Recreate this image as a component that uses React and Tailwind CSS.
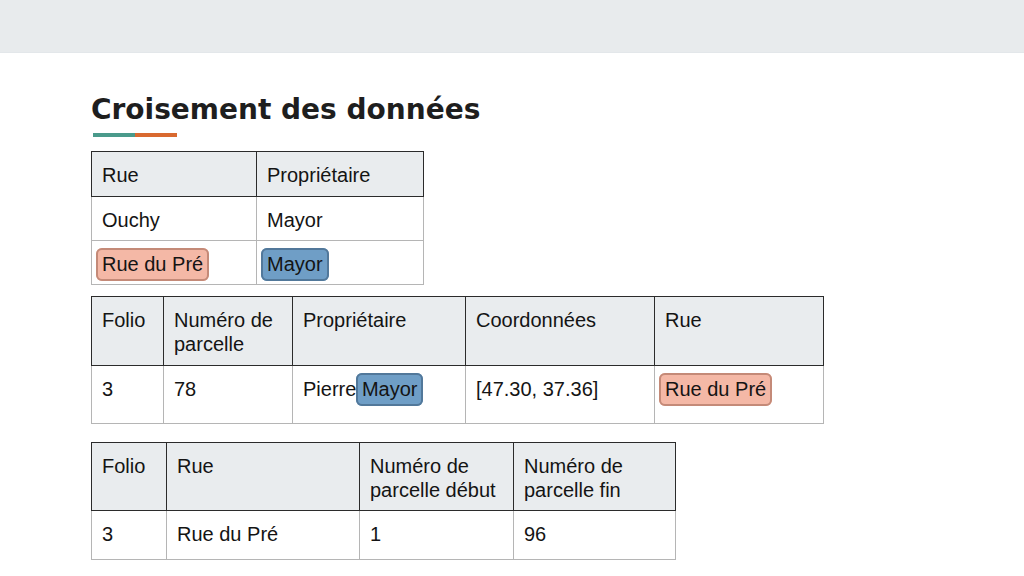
const Pill = ({ color, children }) => {
    const colors = color === 'blue'
        ? 'bg-[#6f9ec6] border-[#52789a]'
        : 'bg-[#f4b8a6] border-[#c48a78]'
    return (
        <span className={`rounded-[6px] border-2 pt-[3px] pb-[4px] px-[4px] -mx-[6px] ${colors}`}>{children}</span>
    )
}

const Th = ({ children, tight }) => (
    <th className={`border border-[#2b2b2b] bg-[#e9ecee] px-[10px] pt-[11px] text-left align-top font-normal ${tight ? 'pb-[8px]' : 'pb-[9px]'}`}>{children}</th>
)

const Td = ({ children, h }) => (
    <td className={`border border-[#b5b5b5] px-[10px] pt-[11px] pb-[8px] align-top ${h || ''}`}>{children}</td>
)

const App = () => {
    return (
        <div className="w-[1024px] h-[576px] overflow-hidden bg-white" style={{ fontFamily: '"Liberation Sans", Arial, sans-serif' }}>
            <div className="h-[53px] bg-[#e8ebed] border-b border-[#e3e7ea]"></div>
            <div className="pl-[91px]">
                <h1 className="mt-[39px] text-[28px] leading-[36px] font-bold text-[#1e1e1e]" style={{ fontFamily: '"DejaVu Sans", sans-serif' }}>Croisement des données</h1>
                <div className="flex mt-[5px] ml-[2px]">
                    <div className="w-[42px] h-[4px] bg-[#4a9a8b]"></div>
                    <div className="w-[42px] h-[4px] bg-[#d9692f]"></div>
                </div>

                <table className="mt-[14px] table-fixed border-collapse w-[333px] text-[20px] leading-[24px] text-[#141414]">
                    <colgroup>
                        <col className="w-[165px]" />
                        <col className="w-[167px]" />
                    </colgroup>
                    <thead>
                        <tr><Th>Rue</Th><Th>Propriétaire</Th></tr>
                    </thead>
                    <tbody>
                        <tr><Td>Ouchy</Td><Td>Mayor</Td></tr>
                        <tr><Td><Pill color="red">Rue du Pré</Pill></Td><Td><Pill color="blue">Mayor</Pill></Td></tr>
                    </tbody>
                </table>

                <table className="mt-[11px] table-fixed border-collapse w-[733px] text-[20px] leading-[24px] text-[#141414]">
                    <colgroup>
                        <col className="w-[72px]" />
                        <col className="w-[129px]" />
                        <col className="w-[173px]" />
                        <col className="w-[189px]" />
                        <col className="w-[169px]" />
                    </colgroup>
                    <thead>
                        <tr><Th>Folio</Th><Th>Numéro de parcelle</Th><Th>Propriétaire</Th><Th>Coordonnées</Th><Th>Rue</Th></tr>
                    </thead>
                    <tbody>
                        <tr>
                            <Td h="h-[58px]">3</Td>
                            <Td h="h-[58px]">78</Td>
                            <Td h="h-[58px]">Pierre <Pill color="blue">Mayor</Pill></Td>
                            <Td h="h-[58px]">[47.30, 37.36]</Td>
                            <Td h="h-[58px]"><Pill color="red">Rue du Pré</Pill></Td>
                        </tr>
                    </tbody>
                </table>

                <table className="mt-[18px] table-fixed border-collapse w-[585px] text-[20px] leading-[24px] text-[#141414]">
                    <colgroup>
                        <col className="w-[75px]" />
                        <col className="w-[193px]" />
                        <col className="w-[154px]" />
                        <col className="w-[162px]" />
                    </colgroup>
                    <thead>
                        <tr><Th tight>Folio</Th><Th tight>Rue</Th><Th tight>Numéro de parcelle début</Th><Th tight>Numéro de parcelle fin</Th></tr>
                    </thead>
                    <tbody>
                        <tr><Td h="h-[49px]">3</Td><Td h="h-[49px]">Rue du Pré</Td><Td h="h-[49px]">1</Td><Td h="h-[49px]">96</Td></tr>
                    </tbody>
                </table>
            </div>
        </div>
    )
}

export default App
